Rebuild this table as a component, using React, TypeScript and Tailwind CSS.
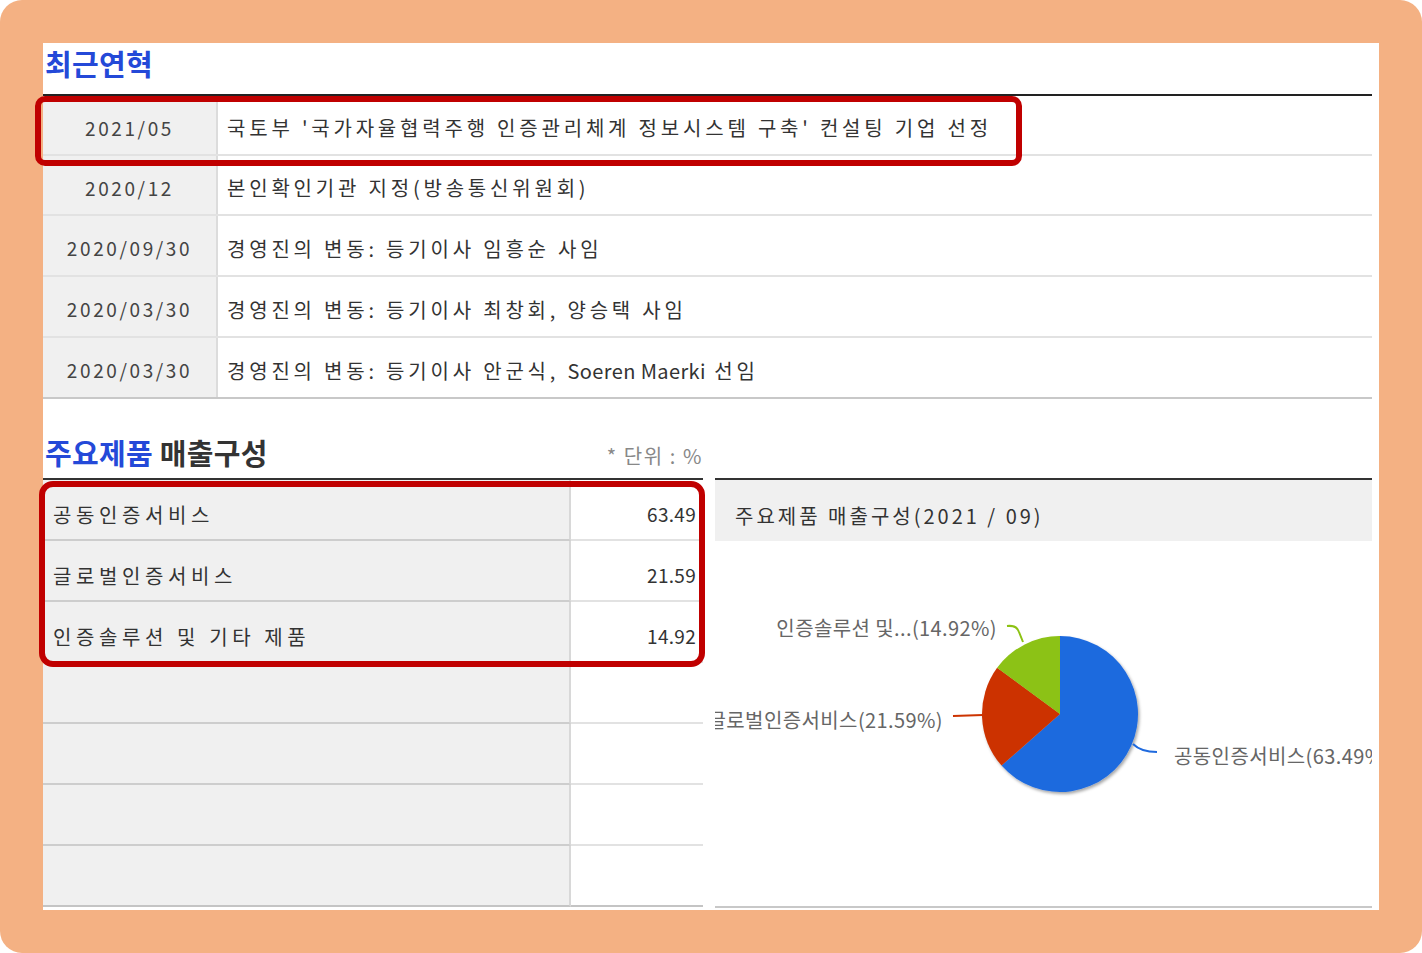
import React from "react";

const FONT = { fontFamily: '"Noto Sans CJK KR", "Noto Sans", sans-serif' };

const history: [string, React.ReactNode][] = [
  ["2021/05", "국토부 '국가자율협력주행 인증관리체계 정보시스템 구축' 컨설팅 기업 선정"],
  ["2020/12", "본인확인기관 지정(방송통신위원회)"],
  ["2020/09/30", "경영진의 변동: 등기이사 임흥순 사임"],
  ["2020/03/30", "경영진의 변동: 등기이사 최창회, 양승택 사임"],
  [
    "2020/03/30",
    <>
      {"경영진의 변동: 등기이사 안군식, "}
      <span className="tracking-[0.4px]">Soeren Maerki</span>
      {" 선임"}
    </>,
  ],
];

const rowHeights = ["h-[60px]", "h-[60px]", "h-[61px]", "h-[61px]", "h-[61px]"];

const products: [string, string][] = [
  ["공동인증서비스", "63.49"],
  ["글로벌인증서비스", "21.59"],
  ["인증솔루션 및 기타 제품", "14.92"],
  ["", ""],
  ["", ""],
  ["", ""],
  ["", ""],
];

function PieChart() {
  return (
    <svg width="657" height="366" viewBox="0 0 657 366" className="absolute left-0 top-0">
      <defs>
        <filter id="pieShadow" x="-20%" y="-20%" width="140%" height="140%">
          <feDropShadow dx="1.5" dy="2" stdDeviation="1.6" floodColor="#000" floodOpacity="0.35" />
        </filter>
      </defs>
      <g filter="url(#pieShadow)">
        <path d="M345 173 L345 95 A78 78 0 1 1 286.53 224.62 Z" fill="#1f6ade" />
        <path d="M345 173 L286.53 224.62 A78 78 0 0 1 282.12 126.84 Z" fill="#cc3300" />
        <path d="M345 173 L282.12 126.84 A78 78 0 0 1 345 95 Z" fill="#8cc213" />
      </g>
      <path d="M292 85 Q302 84 304 91 L308 101" fill="none" stroke="#8cc213" strokeWidth="2" />
      <path d="M238 175 L268 174" fill="none" stroke="#cc3300" strokeWidth="2" />
      <path d="M418 203 Q426 211 442 211" fill="none" stroke="#1f6ade" strokeWidth="2" />
      <g style={FONT} fontSize="20" fill="#666" letterSpacing="0.4">
        <text x="282" y="86" textAnchor="end" dominantBaseline="central">인증솔루션 및...(14.92%)</text>
        <text x="228" y="178" textAnchor="end" dominantBaseline="central">글로벌인증서비스(21.59%)</text>
        <text x="459" y="214" textAnchor="start" dominantBaseline="central">공동인증서비스(63.49%)</text>
      </g>
    </svg>
  );
}

export default function App() {
  return (
    <div className="w-[1422px] h-[953px] bg-white" style={FONT}>
      <div className="h-full bg-[#F4B183] rounded-[22px] p-[43px]">
        <div className="relative h-full bg-white pr-[7px] text-[#333]">
          {/* Section 1 */}
          <div className="h-[51px] pt-[3px] pl-[2px]">
            <h2 className="text-[29px] leading-[34px] font-bold text-[#2449d8] tracking-[0.3px]">최근연혁</h2>
          </div>
          <div className="border-t-2 border-[#222]">
            {history.map(([d, t], i) => (
              <div
                key={i}
                className={`flex ${rowHeights[i]} border-b-2 ${i === history.length - 1 ? "border-[#c8c8c8]" : "border-[#e2e2e2]"}`}
              >
                <div className="w-[175px] shrink-0 bg-[#f0f0f0] border-r-2 border-[#dcdcdc] flex items-center justify-center pt-[6px] text-[19px] tracking-[2.6px] text-[#444]">
                  {d}
                </div>
                <div className="flex items-center pl-[9px] pt-[6px] text-[20px] tracking-[3.8px] text-[#333] whitespace-nowrap">
                  <span>{t}</span>
                </div>
              </div>
            ))}
          </div>

          {/* Section 2 */}
          <div className="flex gap-[12px]">
            <div className="w-[660px] shrink-0">
              <div className="h-[79px] flex items-end justify-between pb-[9px] pl-[2px]">
                <h2 className="text-[29px] leading-[34px] font-bold tracking-[0.3px]">
                  <span className="text-[#2449d8]">주요제품</span> <span className="text-[#333]">매출구성</span>
                </h2>
                <span className="text-[20px] leading-[28px] tracking-[1.6px] text-[#888] -mb-[1px]">* 단위 : %</span>
              </div>
              <div className="border-t-2 border-[#333]">
                {products.map(([n, v], i) => (
                  <div key={i} className="flex h-[61px]">
                    <div
                      className={`w-[528px] shrink-0 bg-[#f0f0f0] border-r-2 border-r-[#d8d8d8] border-b-2 ${i === products.length - 1 ? "border-b-[#c4c4c4]" : "border-b-[#cdcdcd]"} flex items-center pl-[10px] pt-[10px] text-[20px] tracking-[4.6px] text-[#333] whitespace-nowrap`}
                    >
                      <span>{n}</span>
                    </div>
                    <div
                      className={`flex-1 border-b-2 ${i === products.length - 1 ? "border-b-[#c4c4c4]" : "border-b-[#e2e2e2]"} flex items-center justify-end pr-[7px] pt-[10px] text-[19px] tracking-[0.3px] text-[#333]`}
                    >
                      <span>{v}</span>
                    </div>
                  </div>
                ))}
              </div>
            </div>

            <div className="flex-1 mt-[79px] h-[430px] border-t-2 border-[#333] border-b-2 border-b-[#c8c8c8] flex flex-col">
              <div className="h-[61px] shrink-0 bg-[#f0f0f0] flex items-center pl-[20px] pt-[10px] text-[20px] tracking-[3px] text-[#333] whitespace-nowrap">
                <span>주요제품 매출구성(2021 / 09)</span>
              </div>
              <div className="relative flex-1 overflow-hidden">
                <PieChart />
              </div>
            </div>
          </div>

          {/* Red highlight boxes */}
          <div className="absolute left-[-8px] top-[53px] w-[987px] h-[70px] border-[6px] border-[#c00000] rounded-[10px] pointer-events-none" />
          <div className="absolute left-[-4px] top-[438px] w-[666px] h-[186px] border-[6px] border-[#c00000] rounded-[14px] pointer-events-none" />
        </div>
      </div>
    </div>
  );
}
